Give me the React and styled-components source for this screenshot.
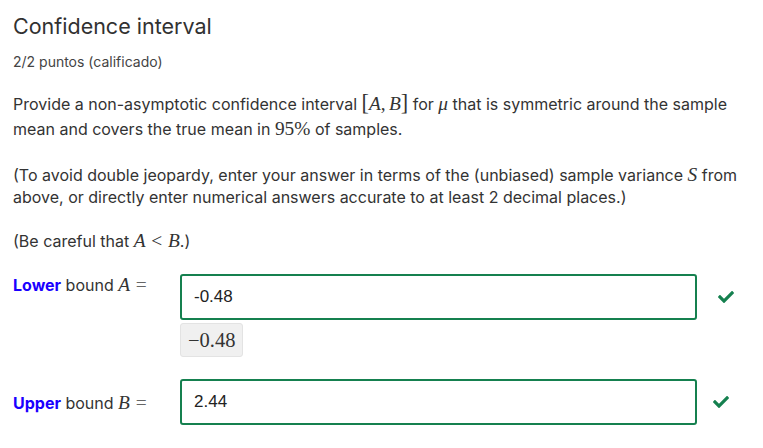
import React from "react";
import styled, { createGlobalStyle } from "styled-components";
import { FaCheck } from "react-icons/fa";

const Global = createGlobalStyle`
  html, body { margin: 0; padding: 0; background: #fff; }
  body { font-family: Inter, "Noto Sans", sans-serif; color: #333; }
`;

const Page = styled.main`
  padding: 11px 13px 0 13px;
  width: 763px;
  box-sizing: border-box;
`;

const Title = styled.h2`
  margin: 0;
  font-size: 21.5px;
  font-weight: 400;
  line-height: 30px;
  color: #313131;
`;

const Score = styled.div`
  margin-top: 11px;
  font-size: 14px;
  line-height: 20px;
  color: #444;
`;

const Body = styled.div`
  display: flow-root;
  margin-top: 19.5px;
  font-size: 16px;
  line-height: 22.4px;
  color: #333;
`;

const P = styled.p`
  margin: 0 0 22px 0;
  line-height: ${(p) => p.$lh || 22.4}px;
`;

const M = styled.span`
  font-family: "Liberation Serif", "DejaVu Serif", serif;
  font-style: ${(p) => (p.$upright ? "normal" : "italic")};
  font-size: 1.21em;
  line-height: 1;
`;

const Rel = styled.span`
  font-family: "Liberation Serif", "DejaVu Serif", serif;
  font-style: normal;
  padding: 0 0.3em;
  color: ${(p) => p.$color || "inherit"};
`;

const Comma = styled.span`
  font-family: "Liberation Serif", "DejaVu Serif", serif;
  font-style: normal;
  padding-right: 0.17em;
`;

const Bracket = styled.span`
  font-family: "Liberation Serif", "DejaVu Serif", serif;
  font-style: normal;
  font-size: 1.15em;
`;

const Row = styled.div`
  display: grid;
  grid-template-columns: 167px 517px 1fr;
  align-items: start;
  margin-top: ${(p) => p.$mt}px;
`;

const Label = styled.div`
  font-size: 16px;
  line-height: 22px;
  padding-top: ${(p) => p.$pt}px;
  color: #333;
`;

const Strong = styled.b`
  font-weight: 700;
  color: #1a00ff;
`;

const Field = styled.div`
  display: flex;
  flex-direction: column;
  align-items: flex-start;
  gap: 3px;
`;

const Input = styled.div`
  box-sizing: border-box;
  width: 517px;
  height: 46px;
  border: 2px solid #15804f;
  border-radius: 3px;
  padding: 0 12px;
  display: flex;
  align-items: center;
  font-family: "Liberation Sans", Arial, sans-serif;
  font-size: 17px;
  color: #222;
`;

const Preview = styled.div`
  box-sizing: border-box;
  height: 34px;
  padding: 0 7px;
  display: flex;
  align-items: center;
  background: #f0f0f0;
  border: 1px solid #e3e3e3;
  border-radius: 3px;
  font-family: "Liberation Serif", "DejaVu Serif", serif;
  font-size: 20.5px;
  color: #333;
`;

const Check = styled.div`
  height: 46px;
  display: flex;
  align-items: center;
  padding-left: ${(p) => p.$pl}px;
  color: #15804f;
  font-size: 16px;
`;

export default function App() {
  return (
    <>
      <Global />
      <Page>
        <Title>Confidence interval</Title>
        <Score>2/2 puntos (calificado)</Score>
        <Body>
          <P $lh={25}>
            Provide a non-asymptotic confidence interval{" "}
            <M>
              <Bracket>[</Bracket>A<Comma>,</Comma>B<Bracket>]</Bracket>
            </M>{" "}
            for <M>μ</M> that is symmetric around the sample mean and covers
            the true mean in <M $upright>95%</M> of samples.
          </P>
          <P>
            (To avoid double jeopardy, enter your answer in terms of the
            (unbiased) sample variance <M>S</M> from above, or directly enter
            numerical answers accurate to at least 2 decimal places.)
          </P>
          <P>
            (Be careful that{" "}
            <M>
              A<Rel>&lt;</Rel>B
            </M>
            .)
          </P>
        </Body>
        <Row $mt={-0.5}>
          <Label $pt={0}>
            <Strong>Lower</Strong> bound{" "}
            <M>
              A<Rel $color="#666">=</Rel>
            </M>
          </Label>
          <Field>
            <Input>-0.48</Input>
            <Preview>−0.48</Preview>
          </Field>
          <Check $pl={21}>
            <FaCheck />
          </Check>
        </Row>
        <Row $mt={22}>
          <Label $pt={13}>
            <Strong>Upper</Strong> bound{" "}
            <M>
              B<Rel $color="#666">=</Rel>
            </M>
          </Label>
          <Field>
            <Input>2.44</Input>
          </Field>
          <Check $pl={16}>
            <FaCheck />
          </Check>
        </Row>
      </Page>
    </>
  );
}
